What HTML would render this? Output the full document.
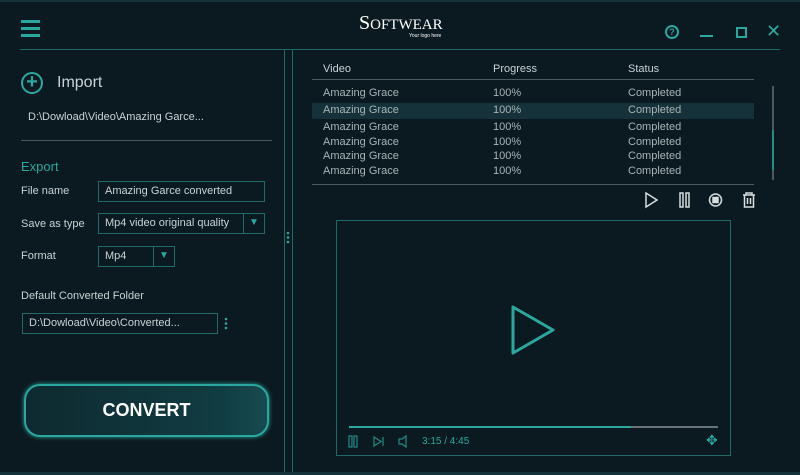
<!DOCTYPE html><html><head><meta charset="utf-8"><style>
*{margin:0;padding:0;box-sizing:border-box}
body{width:800px;height:475px;background:#0b1a20;font-family:"Liberation Sans",sans-serif;color:#c9d3d5;position:relative;overflow:hidden;font-size:11px}
.a{position:absolute}
.t{color:#2aa89f}
.box{position:absolute;border:1px solid #1f6a66;height:21px;padding:3px 6px;font-size:11px;color:#c9d3d5}
.row{position:absolute;left:312px;width:442px;height:15px;font-size:11px;color:#a9b4b6}
.row span{position:absolute;top:1px}
</style></head><body>
<div class="a" style="left:0;top:0;width:800px;height:2px;background:#15323a"></div>
<div class="a" style="left:21px;top:20px;width:19px;height:3px;background:#2aa89f"></div>
<div class="a" style="left:21px;top:27px;width:19px;height:3px;background:#2aa89f"></div>
<div class="a" style="left:21px;top:34px;width:19px;height:3px;background:#2aa89f"></div>
<div class="a" style="left:20px;top:49px;width:760px;height:1px;background:#1f6a66"></div>
<div class="a" style="left:284px;top:49px;width:1px;height:426px;background:#1f6a66"></div>
<div class="a" style="left:292px;top:49px;width:1px;height:426px;background:#1f6a66"></div>
<svg class="a" style="left:286px;top:231px" width="4" height="13" fill="#2aa89f"><circle cx="2" cy="2" r="1.3"/><circle cx="2" cy="6.5" r="1.3"/><circle cx="2" cy="11" r="1.3"/></svg>
<div class="a" style="left:359px;top:12px;font-family:'Liberation Serif',serif;font-size:20px;color:#fff">S<span style="font-size:15px">OFTWEAR</span></div>
<div class="a" style="left:409px;top:33px;font-size:5px;color:#fff">Your logo here</div>
<div class="a" style="left:665px;top:25px;width:14px;height:14px;border:2px solid #2aa89f;border-radius:50%;font-size:9px;font-weight:bold;color:#2aa89f;text-align:center;line-height:10px">?</div>
<div class="a" style="left:700px;top:35px;width:13px;height:2px;background:#2aa89f"></div>
<div class="a" style="left:736px;top:27px;width:11px;height:11px;border:2px solid #2aa89f"></div>
<div class="a t" style="left:766px;top:21px;font-size:18px">✕</div>
<div class="a" style="left:21px;top:72px;width:22px;height:22px;border:2px solid #2aa89f;border-radius:50%;color:#2aa89f;font-size:20px;line-height:17px;text-align:center;font-weight:bold">+</div>
<div class="a" style="left:57px;top:74px;font-size:16px;color:#c9d3d5">Import</div>
<div class="a" style="left:28px;top:111px;font-size:11px">D:\Dowload\Video\Amazing Garce...</div>
<div class="a" style="left:21px;top:140px;width:251px;height:1px;background:#4a5a5e"></div>
<div class="a t" style="left:21px;top:159px;font-size:13px">Export</div>
<div class="a" style="left:21px;top:185px">File name</div>
<div class="box" style="left:98px;top:181px;width:167px">Amazing Garce converted</div>
<div class="a" style="left:21px;top:218px">Save as type</div>
<div class="box" style="left:98px;top:213px;width:167px">Mp4 video original quality</div>
<div class="a" style="left:243px;top:214px;width:1px;height:19px;background:#1f6a66"></div>
<div class="a t" style="left:249px;top:217px;font-size:10px">▼</div>
<div class="a" style="left:21px;top:250px">Format</div>
<div class="box" style="left:98px;top:246px;width:77px">Mp4</div>
<div class="a" style="left:153px;top:247px;width:1px;height:19px;background:#1f6a66"></div>
<div class="a t" style="left:159px;top:250px;font-size:10px">▼</div>
<div class="a" style="left:21px;top:290px">Default Converted Folder</div>
<div class="box" style="left:22px;top:313px;width:196px">D:\Dowload\Video\Converted...</div>
<svg class="a" style="left:224px;top:317px" width="4" height="13" fill="#2aa89f"><circle cx="2" cy="2" r="1.3"/><circle cx="2" cy="6.5" r="1.3"/><circle cx="2" cy="11" r="1.3"/></svg>
<div class="a" style="left:24px;top:384px;width:245px;height:53px;border:2px solid #2aa89f;border-radius:16px;background:linear-gradient(90deg,#0e2a30,#103c42 80%,#174a50);box-shadow:0 0 4px #2aa89f;color:#fff;font-weight:bold;font-size:18px;text-align:center;line-height:49px">CONVERT</div>
<div class="a" style="left:323px;top:63px">Video</div>
<div class="a" style="left:493px;top:63px">Progress</div>
<div class="a" style="left:628px;top:63px">Status</div>
<div class="a" style="left:312px;top:79px;width:442px;height:1px;background:#4a5a5e"></div>
<div class="row" style="top:86px"><span style="left:11px">Amazing Grace</span><span style="left:181px">100%</span><span style="left:316px">Completed</span></div>
<div class="row" style="top:103px;height:16px;background:#15323a"><span style="left:11px">Amazing Grace</span><span style="left:181px">100%</span><span style="left:316px">Completed</span></div>
<div class="row" style="top:120px"><span style="left:11px">Amazing Grace</span><span style="left:181px">100%</span><span style="left:316px">Completed</span></div>
<div class="row" style="top:135px"><span style="left:11px">Amazing Grace</span><span style="left:181px">100%</span><span style="left:316px">Completed</span></div>
<div class="row" style="top:149px"><span style="left:11px">Amazing Grace</span><span style="left:181px">100%</span><span style="left:316px">Completed</span></div>
<div class="row" style="top:164px"><span style="left:11px">Amazing Grace</span><span style="left:181px">100%</span><span style="left:316px">Completed</span></div>
<div class="a" style="left:312px;top:184px;width:442px;height:1px;background:#4a5a5e"></div>
<div class="a" style="left:772px;top:86px;width:2px;height:94px;background:#4a5a5e"></div>
<div class="a" style="left:772px;top:130px;width:2px;height:40px;background:#2a8a84"></div>
<svg class="a" style="left:640px;top:190px" width="120" height="20" fill="none" stroke="#d8dede" stroke-width="1.5">
<path d="M6 3 L17 10 L6 17 Z"/>
<rect x="40" y="3" width="3" height="14"/><rect x="46" y="3" width="3" height="14"/>
<circle cx="75.5" cy="10" r="6"/><rect x="73" y="7.5" width="5" height="5" fill="#d8dede"/>
<path d="M103 5 H115 M106 5 V3 H112 V5 M104.5 5 V17 H113.5 V5 M107.5 8 V14 M110.5 8 V14"/>
</svg>
<div class="a" style="left:336px;top:220px;width:395px;height:236px;border:1px solid #1f6a66"></div>
<svg class="a" style="left:508px;top:303px" width="50" height="54" fill="none" stroke="#2aa89f" stroke-width="3" stroke-linejoin="round"><path d="M5 4 L45 27 L5 50 Z"/></svg>
<div class="a" style="left:349px;top:426px;width:369px;height:2px;background:#6a7476"></div>
<div class="a" style="left:349px;top:426px;width:282px;height:2px;background:#2aa89f"></div>
<svg class="a" style="left:345px;top:434px" width="80" height="16" fill="none" stroke="#1f8a84" stroke-width="1.2">
<rect x="4" y="2" width="3" height="11"/><rect x="9" y="2" width="3" height="11"/>
<path d="M29 3 L36 7.5 L29 12 Z M38 3 V12"/>
<path d="M54 5 H57 L61 2 V13 L57 10 H54 Z"/>
</svg>
<div class="a t" style="left:422px;top:436px;font-size:10px">3:15 / 4:45</div>
<div class="a t" style="left:706px;top:432px;font-size:14px">✥</div>
<div class="a" style="left:0;top:472px;width:800px;height:3px;background:#15323a"></div>
</body></html>
